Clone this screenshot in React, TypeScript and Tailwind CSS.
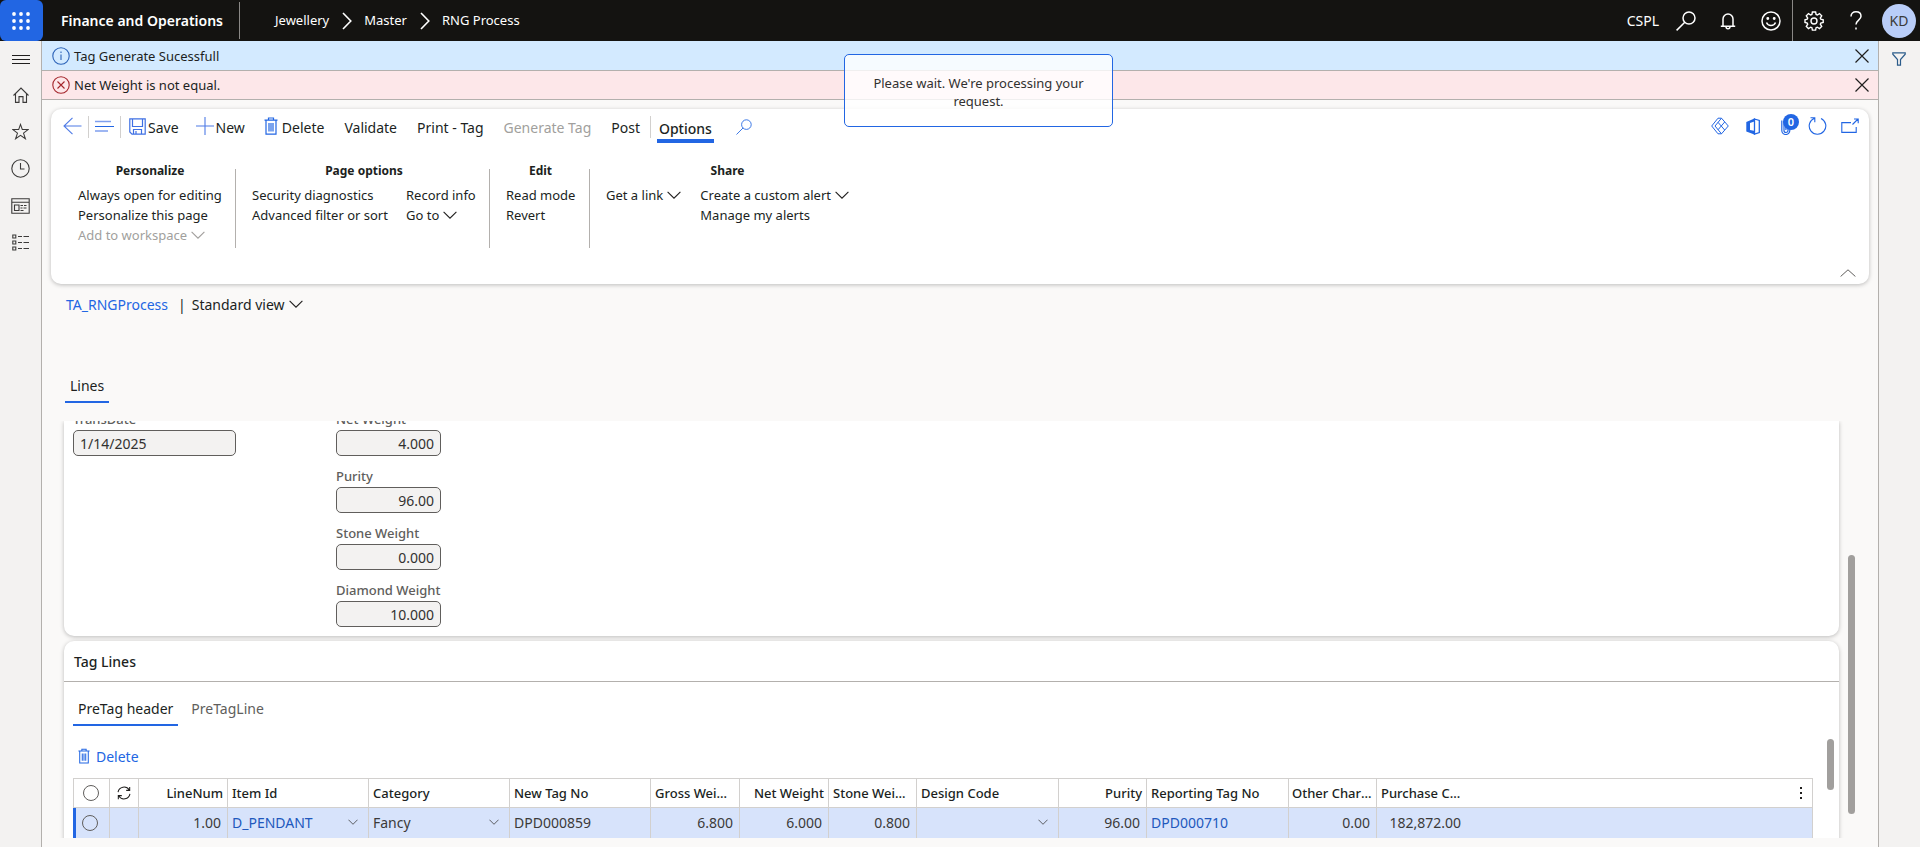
import React, { useState } from "react";

type IconProps = { className?: string; children?: React.ReactNode; box?: string; sw?: number };

function Svg({ className = "size-5", children, box = "0 0 20 20", sw = 1.2 }: IconProps) {
  return (
    <svg viewBox={box} className={`shrink-0 ${className}`} fill="none" stroke="currentColor" strokeWidth={sw} aria-hidden="true">
      {children}
    </svg>
  );
}

const ChevronDown = ({ className = "h-2 w-3.5" }: { className?: string }) => (
  <Svg className={className} box="0 0 14 8" sw={1.1}>
    <path d="M.6.8 7 7.2 13.4.8" />
  </Svg>
);

const Close = () => (
  <Svg className="size-3.5" box="0 0 14 14" sw={1.2}>
    <path d="M.5.5l13 13M13.5.5l-13 13" />
  </Svg>
);

const Trash = ({ className }: { className: string }) => (
  <Svg className={className} box="0 0 14 18" sw={1.2}>
    <path d="M.5 3.2h13M4.500 3V1h5v2M2 3.2v14h10v-14M5 6v8.500M7 6v8.500M9 6v8.500" />
  </Svg>
);

const Search = ({ className, sw = 1.1 }: { className: string; sw?: number }) => (
  <Svg className={className} box="0 0 20 20" sw={sw}>
    <circle cx="13" cy="7" r="6" />
    <path d="M8.800 11.200.600 19.400" />
  </Svg>
);

const Waffle = () => (
  <svg viewBox="0 0 18 18" className="size-[18px]" fill="currentColor" aria-hidden="true">
    {[2, 9, 16].map((y) => [2, 9, 16].map((x) => <circle key={`${x}-${y}`} cx={x} cy={y} r="1.900" />))}
  </svg>
);

const Gear = () => (
  <Svg className="size-5" box="0 0 20 20" sw={1.4}>
    <path d="M8.400 1h3.200l.500 2.500 1.200.500 2.200-1.400 2.200 2.200-1.400 2.200.5 1.200 2.400.5v2.700l-2.400.6-.5 1.200 1.400 2.200-2.200 2.200-2.200-1.400-1.200.5-.5 2.400H8.400l-.5-2.400-1.200-.5-2.200 1.400-2.200-2.200 1.400-2.200-.5-1.200L1 11.400V8.700l2.200-.5.5-1.200-1.400-2.200 2.200-2.200 2.200 1.400 1.200-.5z" />
    <circle cx="10" cy="10" r="3" />
  </Svg>
);

function Rail() {
  const item = "flex h-[37px] w-full items-center justify-center";
  return (
    <nav aria-label="Main" className="flex w-[42px] shrink-0 flex-col items-center border-r border-[#b3b0ad] bg-[#f3f2f1] text-[#3b3a39]">
      <button aria-label="Expand the navigation pane" className="flex h-[35px] w-full items-center justify-center pt-px">
        <Svg className="h-[11px] w-[18px] text-[#201f1e]" box="0 0 18 11" sw={1}>
          <path d="M0 1.500h18M0 5.500h18M0 9.500h18" />
        </Svg>
      </button>
      <button aria-label="Home" className={item}>
        <Svg className="size-4" box="0 0 16 16" sw={1.1}>
          <path d="M.5 8.500 8 1l7.500 7.500M2.500 6.800v8.600H6V9.600h4v5.800h3.500V6.800" />
        </Svg>
      </button>
      <button aria-label="Favorites" className={item}>
        <Svg className="size-[17px]" box="0 0 18 18" sw={1.1}>
          <path d="m9 1.500 1.900 5.400h6.300l-5 3.800 2 6L9 13l-5.200 3.700 2-6-5-3.800h6.300z" />
        </Svg>
      </button>
      <button aria-label="Recent" className={item}>
        <Svg className="size-[19px]" box="0 0 19 19" sw={1.1}>
          <circle cx="9.500" cy="9.500" r="8.700" />
          <path d="M9.500 4v6h4" />
        </Svg>
      </button>
      <button aria-label="Workspaces" className={item}>
        <Svg className="h-4 w-[19px]" box="0 0 19 16" sw={1.1}>
          <path d="M.8.800h17.400v14.400H.8zM.8 4.200h17.400M3.500 7h4.500v5.500H3.500zM9.500 7.500H12M13 7.500h2.500M9.500 10h2M12.500 10h3M9.500 12.500h3" />
        </Svg>
      </button>
      <button aria-label="Modules" className={item}>
        <Svg className="h-[17px] w-[18px]" box="0 0 18 17" sw={1.1}>
          <path d="M.8 1h3v3h-3zM.8 7h3v3h-3zM.8 13h3v3h-3zM6 2.500h4M11.500 2.500H17M6 8.500h4M11.500 8.500H17M6 14.500h4M11.500 14.500H17" />
        </Svg>
      </button>
    </nav>
  );
}

function Header() {
  const crumb = "text-[13px]";
  const sep = (
    <Svg className="mr-3 ml-[13px] h-[18px] w-2.5" box="0 0 10 18" sw={1.6}>
      <path d="m1 1 7.800 8L1 17" />
    </Svg>
  );
  const act = "flex h-full items-center justify-center";
  return (
    <header className="flex h-[41px] shrink-0 items-center bg-[#141311] text-white">
      <button aria-label="App launcher" className="flex h-full w-[43px] items-center justify-center rounded-md bg-[#2266e3] pr-px">
        <Waffle />
      </button>
      <a href="#home" className="ml-[18px] text-[14px] font-semibold">Finance and Operations</a>
      <span className="ml-4 h-[37px] w-px bg-[#8a8886]" />
      <nav aria-label="Breadcrumb" className="ml-[35px] flex items-center pt-px">
        <a href="#jewellery" className={crumb}>Jewellery</a>
        {sep}
        <a href="#master" className={crumb}>Master</a>
        {sep}
        <a href="#rng" className={crumb}>RNG Process</a>
      </nav>
      <div className="ml-auto flex h-full items-center">
        <button className="text-[14px]">CSPL</button>
        <button aria-label="Search" className={`${act} ml-[5px] w-[43px]`}>
          <Search className="size-5" sw={1.5} />
        </button>
        <button aria-label="Notifications" className={`${act} w-[42px]`}>
          <Svg className="h-[18px] w-4" box="0 0 16 18" sw={1.5}>
            <path d="M3 14V7a5 5 0 0 1 10 0v7M.800 14.200h14.400M6 14.500c0 3 4 3 4 0" />
          </Svg>
        </button>
        <button aria-label="Feedback" className={`${act} w-[43px]`}>
          <Svg className="size-5" sw={1.5}>
            <circle cx="10" cy="10" r="9" />
            <path d="M5.500 11.500c1.500 4 7.500 4 9 0" />
            <circle cx="6.800" cy="7.500" r=".7" fill="currentColor" />
            <circle cx="13.200" cy="7.500" r=".7" fill="currentColor" />
          </Svg>
        </button>
        <button aria-label="Settings" className={`${act} w-[43px] border-l border-[#8a8886]`}>
          <Gear />
        </button>
        <button aria-label="Help" className={`${act} w-[42px]`}>
          <Svg className="h-[19px] w-3" box="0 0 12 19" sw={1.5}>
            <path d="M1 5.500C1 2.500 3 .8 6 .8s5 1.700 5 4.500c0 3.700-5 4-5 8.200M6 16.500v2" />
          </Svg>
        </button>
        <button aria-label="Account" className="mr-1 ml-[5px] flex size-[34px] items-center justify-center rounded-full bg-[#b9cdf8] text-[14px] text-[#3b3a39]">
          KD
        </button>
      </div>
    </header>
  );
}

function Message({ kind, text, onClose }: { kind: "info" | "error"; text: string; onClose: () => void }) {
  const tone = kind === "info" ? "bg-[#d3eaff]" : "bg-[#fde7e9]";
  return (
    <div role="status" className={`flex shrink-0 items-center border-b border-[#b3b0ad] pr-2 pl-2.5 ${kind === "info" ? "h-[30px]" : "h-[29px]"} ${tone}`}>
      {kind === "info" ? (
        <Svg className="size-[18px] text-[#2b62b8]" box="0 0 18 18" sw={1.1}>
          <circle cx="9" cy="9" r="8.200" />
          <path d="M9 7.500V13M9 4.500V6" />
        </Svg>
      ) : (
        <Svg className="size-[18px] text-[#a4262c]" box="0 0 18 18" sw={1.1}>
          <circle cx="9" cy="9" r="8.200" />
          <path d="m5.500 5.500 7 7m0-7-7 7" />
        </Svg>
      )}
      <span className="ml-1 pt-0.5 text-[13px]">{text}</span>
      <button aria-label="Close message" onClick={onClose} className="ml-auto p-px">
        <Close />
      </button>
    </div>
  );
}

function CommandBar() {
  const cmd = "flex h-6 items-center px-2.5";
  const line = "h-[22px] w-px bg-[#d2d0ce]";
  return (
    <div role="toolbar" aria-label="Commands" className="flex h-9 items-center pr-2.5 pl-3 text-[14px]">
      <button aria-label="Back" className="pb-0.5 text-[#4f7be6]">
        <Svg className="h-[18px] w-[19px]" box="0 0 19 18" sw={1.1}>
          <path d="M18.500 9H1M9.500.800 1 9l8.500 8.200" />
        </Svg>
      </button>
      <span className={`${line} ml-1.5`} />
      <button aria-label="Show list" className="px-1.5 pb-0.5 text-[#2266e3]">
        <Svg className="h-3 w-[19px]" box="0 0 19 12" sw={1}>
          <path d="M0 6.500h19" />
          <path d="M0 1.500h16M0 11h13" stroke="#7f9fee" strokeWidth="1.500" />
        </Svg>
      </button>
      <span className={line} />
      <button className="flex h-6 items-center gap-0.5 pr-2.5 pl-2">
        <Svg className="mb-0.5 size-[17px] text-[#3f70e4]" box="0 0 17 17" sw={1.2}>
          <path d="M.800.800h15.400v15.400H3L.800 14zM3.500 1v7.500h10V1M4.500 16v-4.500h8V16M7 13v3" />
        </Svg>
        Save
      </button>
      <button className="flex h-6 items-center gap-0.5 pr-2.5 pl-[7px]">
        <Svg className="mb-0.5 size-[18px] text-[#4f7be6]" box="0 0 18 18" sw={1.1}>
          <path d="M9 0v18M0 9h18" />
        </Svg>
        New
      </button>
      <button className="flex h-6 items-center gap-1 pr-2.5 pl-[9px]">
        <Trash className="mb-0.5 h-[18px] w-3.5 text-[#2266e3]" />
        Delete
      </button>
      <button className={cmd}>Validate</button>
      <button className={cmd}>Print - Tag</button>
      <button disabled className={`${cmd} text-[#a19f9d]`}>Generate Tag</button>
      <button className={cmd}>Post</button>
      <span className={line} />
      <button className="ml-1.5 border-b-4 border-[#2266e3] px-0.5 pt-1.5 font-medium">Options</button>
      <button aria-label="Search commands" className="ml-[22px] text-[#2266e3]">
        <Search className="size-4" />
      </button>
      <div className="ml-auto flex items-center pb-0.5 text-[#2266e3]">
        <button aria-label="Power Apps" className="w-[35px]">
          <Svg className="size-[18px]" box="0 0 18 18" sw={1}>
            <path d="M7 1.200 .700 9 7 16.800h3.500L17.300 9 10.500 1.200zM10.500 1.200 4 9l6.500 7.800M7 5.300 13.700 13M13.700 5 7 12.800" />
          </Svg>
        </button>
        <button aria-label="Open in Microsoft Office" className="w-[35px]">
          <Svg className="h-[17px] w-3.5" box="0 0 14 17" sw={1.3}>
            <path d="M.3 4 9 .3v3L4 5v7l5 1v3.700L.3 13.500z" fill="currentColor" stroke="none" />
            <path d="M8.500 1 13.300 2.500v12L8.500 16z" />
          </Svg>
        </button>
        <button aria-label="Attachments" className="relative w-[27px]">
          <Svg className="h-[18px] w-2.5" box="0 0 10 18" sw={1.2}>
            <path d="M.8 3.500v10a4 4 0 0 0 8 0v-10M3 4v9.500a2 2 0 0 0 4 0V5M4.900 6v7" />
          </Svg>
          <span className="absolute -top-[3px] left-0.5 flex size-4 items-center justify-center rounded-full bg-[#2266e3] text-[11px] font-semibold text-white">0</span>
        </button>
        <button aria-label="Refresh" className="w-[33px]">
          <Svg className="h-[18px] w-[19px]" box="0 0 19 18" sw={1.1}>
            <path d="M6.500 1.200A8.300 8.300 0 1 0 13 1.400M2.500.8h4.300v4.500" />
          </Svg>
        </button>
        <button aria-label="Open in a new window" className="w-[18px]">
          <Svg className="h-4 w-[18px]" box="0 0 18 16" sw={1.1}>
            <path d="M10 4.600H.800v9.800h14.400V9M11.500 6.500 17 1M13 1h4.200v4.200" />
          </Svg>
        </button>
      </div>
    </div>
  );
}

function Ribbon() {
  const title = "text-center text-[12px] leading-5 font-bold";
  const rows = "mt-1 flex flex-col items-start leading-5";
  const split = "mt-2 h-[79px] w-px bg-[#b3b0ad]";
  const drop = "flex items-center gap-1";
  return (
    <div className="flex pt-4 pl-[27px] text-[13px] whitespace-nowrap">
      <section className="w-[144px]">
        <h2 className={title}>Personalize</h2>
        <div className={rows}>
          <button>Always open for editing</button>
          <button>Personalize this page</button>
          <button disabled className={`${drop} text-[#a19f9d]`}>
            Add to workspace <ChevronDown />
          </button>
        </div>
      </section>
      <span className={`${split} ml-[13px]`} />
      <section className="ml-4 w-[224px]">
        <h2 className={title}>Page options</h2>
        <div className="flex">
          <div className={`${rows} w-[154px]`}>
            <button>Security diagnostics</button>
            <button>Advanced filter or sort</button>
          </div>
          <div className={rows}>
            <button>Record info</button>
            <button className={drop}>
              Go to <ChevronDown />
            </button>
          </div>
        </div>
      </section>
      <span className={`${split} ml-[13px]`} />
      <section className="ml-4 w-[69px]">
        <h2 className={title}>Edit</h2>
        <div className={rows}>
          <button>Read mode</button>
          <button>Revert</button>
        </div>
      </section>
      <span className={`${split} ml-[14px]`} />
      <section className="ml-4 w-[243px]">
        <h2 className={title}>Share</h2>
        <div className="flex">
          <div className={`${rows} w-[95px]`}>
            <button className={drop}>
              Get a link <ChevronDown />
            </button>
          </div>
          <div className={rows}>
            <button className={drop}>
              Create a custom alert <ChevronDown />
            </button>
            <button>Manage my alerts</button>
          </div>
        </div>
      </section>
    </div>
  );
}

function Field({ id, label, value, numeric }: { id: string; label: string; value: string; numeric?: boolean }) {
  return (
    <div className="flex flex-col">
      <label htmlFor={id} className="h-5 text-[13px] leading-[18px] font-medium whitespace-nowrap text-[#605e5c]">
        {label}
      </label>
      <input
        id={id}
        readOnly
        defaultValue={value}
        className={`h-[26px] rounded-[5px] border border-[#605e5c] bg-[#f3f2f1] px-1.5 text-[14px] text-[#323130] outline-none ${numeric ? "w-[105px] text-right" : "w-[163px]"}`}
      />
    </div>
  );
}

const columns = [
  { label: "LineNum", width: "w-[89px]", right: true, value: "1.00" },
  { label: "Item Id", width: "w-[141px]", value: "D_PENDANT", link: true, drop: true },
  { label: "Category", width: "w-[141px]", value: "Fancy", drop: true },
  { label: "New Tag No", width: "w-[141px]", value: "DPD000859" },
  { label: "Gross Weight", width: "w-[89px]", right: true, value: "6.800" },
  { label: "Net Weight", width: "w-[89px]", right: true, value: "6.000" },
  { label: "Stone Weight", width: "w-[88px]", right: true, value: "0.800" },
  { label: "Design Code", width: "w-[142px]", value: "", drop: true },
  { label: "Purity", width: "w-[88px]", right: true, value: "96.00" },
  { label: "Reporting Tag No", width: "w-[142px]", value: "DPD000710", link: true },
  { label: "Other Charges", width: "w-[88px]", right: true, value: "0.00", tight: true },
  { label: "Purchase Cost", width: "w-[90px]", right: true, value: "182,872.00", last: true },
];

function LinesTable() {
  const under = "border-b border-[#d2d0ce]";
  const edge = "border-r border-r-[#d2d0ce]";
  const ring = "block size-4 appearance-none rounded-full border border-[#605e5c]";
  return (
    <table className="w-full table-fixed border-separate border-spacing-0 border-t border-r border-[#d2d0ce] text-left">
      <thead>
        <tr className="h-[29px] text-[13px]">
          <th className={`${under} ${edge} w-[37px] border-l`}>
            <input type="radio" name="rows" aria-label="Select all rows" className={`${ring} ml-[9px]`} />
          </th>
          <th className={`${under} ${edge} w-[29px]`}>
            <button aria-label="Refresh rows" className="mx-auto block">
              <Svg className="size-3.5" box="0 0 16 16" sw={1.2}>
                <path d="M1.200 7A7 7 0 0 1 14 4.500M14.500 1v4h-4M14.800 9A7 7 0 0 1 2 11.500M1.500 15v-4h4" />
              </Svg>
            </button>
          </th>
          {columns.map((c) => (
            <th key={c.label} className={`truncate pt-0.5 font-medium ${c.tight ? "px-[3px]" : "px-1"} ${under} ${c.last ? "" : edge} ${c.width} ${c.right ? "text-right" : ""}`}>
              {c.label}
            </th>
          ))}
          <th className={under}>
            <button aria-label="Grid options" className="mr-2.5 ml-auto block">
              <Svg className="h-3 w-0.5" box="0 0 2 12" sw={2}>
                <path d="M1 0v2M1 5v2M1 10v2" />
              </Svg>
            </button>
          </th>
        </tr>
      </thead>
      <tbody>
        <tr className="h-[31px] bg-[#d7e3fb] text-[14px] text-[#3b3a39]">
          <td className={`${under} ${edge} border-l-[3px] border-l-[#2266e3]`}>
            <input type="radio" name="rows" aria-label="Select row 1" className={`${ring} ml-1.5`} />
          </td>
          <td className={`${under} ${edge}`} />
          {columns.map((c) => (
            <td key={c.label} className={`pr-1.5 pb-0.5 pl-1 ${under} ${c.last ? "" : edge} ${c.right ? "text-right" : ""}`}>
              {c.drop ? (
                <span className="flex items-center justify-between pr-1">
                  {c.link ? <a href="#item" className="text-[#2158bd]">{c.value}</a> : <span>{c.value}</span>}
                  <button aria-label={`Open ${c.label} list`}>
                    <ChevronDown className="h-1.5 w-2.5" />
                  </button>
                </span>
              ) : c.link ? (
                <a href="#tag" className="text-[#2158bd]">{c.value}</a>
              ) : (
                c.value
              )}
            </td>
          ))}
          <td />
        </tr>
      </tbody>
    </table>
  );
}

export default function App() {
  const [closed, setClosed] = useState<string[]>([]);
  const card = "rounded-[10px] bg-white shadow-[0_1px_4px_rgba(0,0,0,0.25)]";
  return (
    <div className="flex h-screen flex-col overflow-hidden bg-[#faf9f8] font-['Noto_Sans','Open_Sans',sans-serif] text-[#201f1e]">
      <Header />
      <div className="flex min-h-0 flex-1">
        <Rail />
        <main className="relative flex min-w-0 flex-1 flex-col">
          {!closed.includes("info") && <Message kind="info" text="Tag Generate Sucessfull" onClose={() => setClosed([...closed, "info"])} />}
          {!closed.includes("error") && <Message kind="error" text="Net Weight is not equal." onClose={() => setClosed([...closed, "error"])} />}

          <section className={`relative mx-[9px] mt-[9px] h-[175px] shrink-0 ${card}`}>
            <CommandBar />
            <Ribbon />
            <button aria-label="Collapse" className="absolute right-[13px] bottom-[7px] text-[#605e5c]">
              <Svg className="h-2 w-4" box="0 0 16 8" sw={1}>
                <path d="M.6 7.500 8 .8l7.400 6.700" />
              </Svg>
            </button>
          </section>

          <div className="mt-2 flex h-6 shrink-0 items-center pl-6 text-[14px]">
            <a href="#process" className="text-[#2266e3]">TA_RNGProcess</a>
            <span className="mr-1.5 ml-2.5">|</span>
            <button className="flex items-center gap-1">
              Standard view <ChevronDown />
            </button>
          </div>

          <div role="tablist" className="mt-[58px] flex shrink-0 pl-[23px] text-[14px]">
            <button role="tab" aria-selected="true" className="border-b-2 border-[#2266e3] px-[5px] pt-px pb-1 leading-[22px]">Lines</button>
          </div>

          <div className="mt-[18px] mb-[9px] flex min-h-0 flex-1 overflow-hidden pr-[23px] pl-[22px]">
            <div className="min-w-0 flex-1">
              <section className={`flex h-[215px] items-start px-[9px] ${card} rounded-t-none`}>
                <div className="-mt-[11px] w-[263px]">
                  <Field id="transDate" label="TransDate" value="1/14/2025" />
                </div>
                <div className="-mt-[11px] flex flex-col gap-[11px]">
                  <Field id="netWeight" label="Net Weight" value="4.000" numeric />
                  <Field id="purity" label="Purity" value="96.00" numeric />
                  <Field id="stoneWeight" label="Stone Weight" value="0.000" numeric />
                  <Field id="diamondWeight" label="Diamond Weight" value="10.000" numeric />
                </div>
              </section>
              <section className={`mt-[5px] h-[240px] ${card}`}>
                <h2 className="flex h-[41px] items-center border-b border-[#b3b0ad] px-2.5 text-[14px] font-medium">Tag Lines</h2>
                <div className="flex">
                  <div className="min-w-0 flex-1 pl-[9px]">
                    <div role="tablist" className="mt-4 flex gap-2 text-[14px] leading-[22px]">
                      <button role="tab" aria-selected="true" className="border-b-2 border-[#2266e3] px-[5px] pb-1">PreTag header</button>
                      <button role="tab" aria-selected="false" className="px-[5px] pb-1.5 text-[#605e5c]">PreTagLine</button>
                    </div>
                    <button className="mt-[19px] mb-[11px] ml-[5px] flex h-[22px] items-center gap-1.5 text-[14px] text-[#2266e3]">
                      <Trash className="h-4 w-3" /> Delete
                    </button>
                    <LinesTable />
                  </div>
                  <div className="flex w-[26px] justify-center pt-[57px] pl-2">
                    <span className="h-[51px] w-[7px] rounded-full bg-[#a19f9d]" />
                  </div>
                </div>
              </section>
            </div>
            <div className="w-4 pt-[134px] pl-[9px]">
              <div className="h-[259px] w-[7px] rounded-full bg-[#a19f9d]" />
            </div>
          </div>

          <div role="alert" className="absolute top-[13px] left-1/2 ml-[-116px] flex h-[73px] w-[269px] items-center justify-center rounded-[5px] border border-[#2266e3] bg-white/80 px-5 pt-0.5 text-center text-[13px] leading-[18px] text-[#323130]">
            Please wait. We're processing your request.
          </div>
        </main>
        <aside aria-label="Filters" className="w-[42px] shrink-0 border-l border-[#b3b0ad] bg-[#f3f2f1] pt-[7px] pl-[13px]">
          <button aria-label="Show filters">
            <Svg className="size-3.5 text-[#2b5c8a]" box="0 0 14 14" sw={1.2}>
              <path d="M.800.800h12.400v1.400L8.500 7.500v5.700h-3V7.500L.800 2.200z" />
            </Svg>
          </button>
        </aside>
      </div>
    </div>
  );
}
